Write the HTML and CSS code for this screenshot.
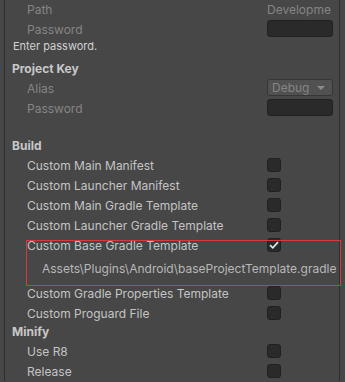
FILE: index.html
```html
<!DOCTYPE html>
<html lang="en">
<head>
    <meta charset="UTF-8">
    <meta name="viewport" content="width=device-width, initial-scale=1.0">
    <title>Publishing Settings</title>
    <link rel="stylesheet" href="styles.css">
</head>
<body>
    <div class="panel">
        <div class="row first disabled">
            <span class="label">Path</span>
            <span class="value">Developme</span>
        </div>
        <div class="row disabled">
            <span class="label">Password</span>
            <span class="field"></span>
        </div>
        <div class="hint">Enter password.</div>

        <div class="header key">Project Key</div>
        <div class="row disabled">
            <span class="label">Alias</span>
            <span class="dropdown">Debug<i class="arrow"></i></span>
        </div>
        <div class="row disabled">
            <span class="label">Password</span>
            <span class="field"></span>
        </div>

        <div class="header build">Build</div>
        <div class="row">
            <span class="label">Custom Main Manifest</span>
            <span class="check"></span>
        </div>
        <div class="row">
            <span class="label">Custom Launcher Manifest</span>
            <span class="check"></span>
        </div>
        <div class="row">
            <span class="label">Custom Main Gradle Template</span>
            <span class="check"></span>
        </div>
        <div class="row">
            <span class="label">Custom Launcher Gradle Template</span>
            <span class="check"></span>
        </div>
        <div class="highlight">
            <div class="row">
                <span class="label">Custom Base Gradle Template</span>
                <span class="check on">
                    <svg width="10" height="8" viewBox="0 0 10 8"><path d="M1 4.2 L3.8 6.8 L9 1.2" fill="none" stroke="#e4e4e4" stroke-width="1.7"/></svg>
                </span>
            </div>
            <div class="path-row">Assets\Plugins\Android\baseProjectTemplate.gradle</div>
        </div>
        <div class="row">
            <span class="label">Custom Gradle Properties Template</span>
            <span class="check"></span>
        </div>
        <div class="row">
            <span class="label">Custom Proguard File</span>
            <span class="check"></span>
        </div>

        <div class="header">Minify</div>
        <div class="row">
            <span class="label">Use R8</span>
            <span class="check"></span>
        </div>
        <div class="row">
            <span class="label">Release</span>
            <span class="check"></span>
        </div>
    </div>
</body>
</html>
```

FILE: styles.css
```css
body {
    margin: 0;
    background-color: #474747;
    font-family: Inter, "Noto Sans", sans-serif;
    font-size: 12px;
    color: #c4c4c4;
    overflow: hidden;
}
.panel {
    margin-left: 4px;
    width: 334px;
    height: 382px;
    border-left: 1px solid #2e2e2e;
    border-right: 1px solid #2e2e2e;
}
.row {
    display: flex;
    align-items: center;
    height: 20px;
    padding-left: 22px;
}
.row.first {
    margin-top: -1px;
}
.label {
    flex: 1;
    white-space: nowrap;
}
.disabled {
    color: #858585;
}
.value {
    width: 66px;
    margin-right: 6px;
    overflow: hidden;
    white-space: nowrap;
    padding-left: 1px;
}
.field {
    width: 64px;
    height: 15px;
    margin-right: 6px;
    margin-top: -2px;
    background: #2a2a2a;
    border: 1px solid #222222;
    border-radius: 3px;
}
.dropdown {
    position: relative;
    width: 60px;
    height: 15px;
    line-height: 15px;
    margin-right: 6px;
    margin-top: -2px;
    padding-left: 4px;
    background: #515151;
    border: 1px solid #363636;
    border-radius: 3px;
}
.arrow {
    position: absolute;
    right: 7px;
    top: 6px;
    border-left: 4px solid transparent;
    border-right: 4px solid transparent;
    border-top: 4px solid #8c8c8c;
}
.hint {
    height: 14px;
    line-height: 14px;
    padding-left: 8px;
    font-size: 11px;
    color: #d0d0d0;
}
.header {
    height: 18px;
    line-height: 18px;
    padding-left: 7px;
    font-weight: 700;
    color: #c8c8c8;
}
.header.key {
    margin-top: 7px;
}
.header.build {
    margin-top: 19px;
}
.check {
    width: 12px;
    height: 12px;
    margin-right: 58px;
    background: #2a2a2a;
    border: 1px solid #212121;
    border-radius: 3px;
    display: flex;
    align-items: center;
    justify-content: center;
}
.highlight {
    position: relative;
}
.highlight::after {
    content: "";
    position: absolute;
    left: 21px;
    right: -2px;
    top: 5px;
    bottom: -3px;
    border: 1px solid #d83a3a;
    pointer-events: none;
}
.path-row {
    height: 28px;
    line-height: 28px;
    padding-left: 37px;
    white-space: nowrap;
    color: #b8b8b8;
}
```
